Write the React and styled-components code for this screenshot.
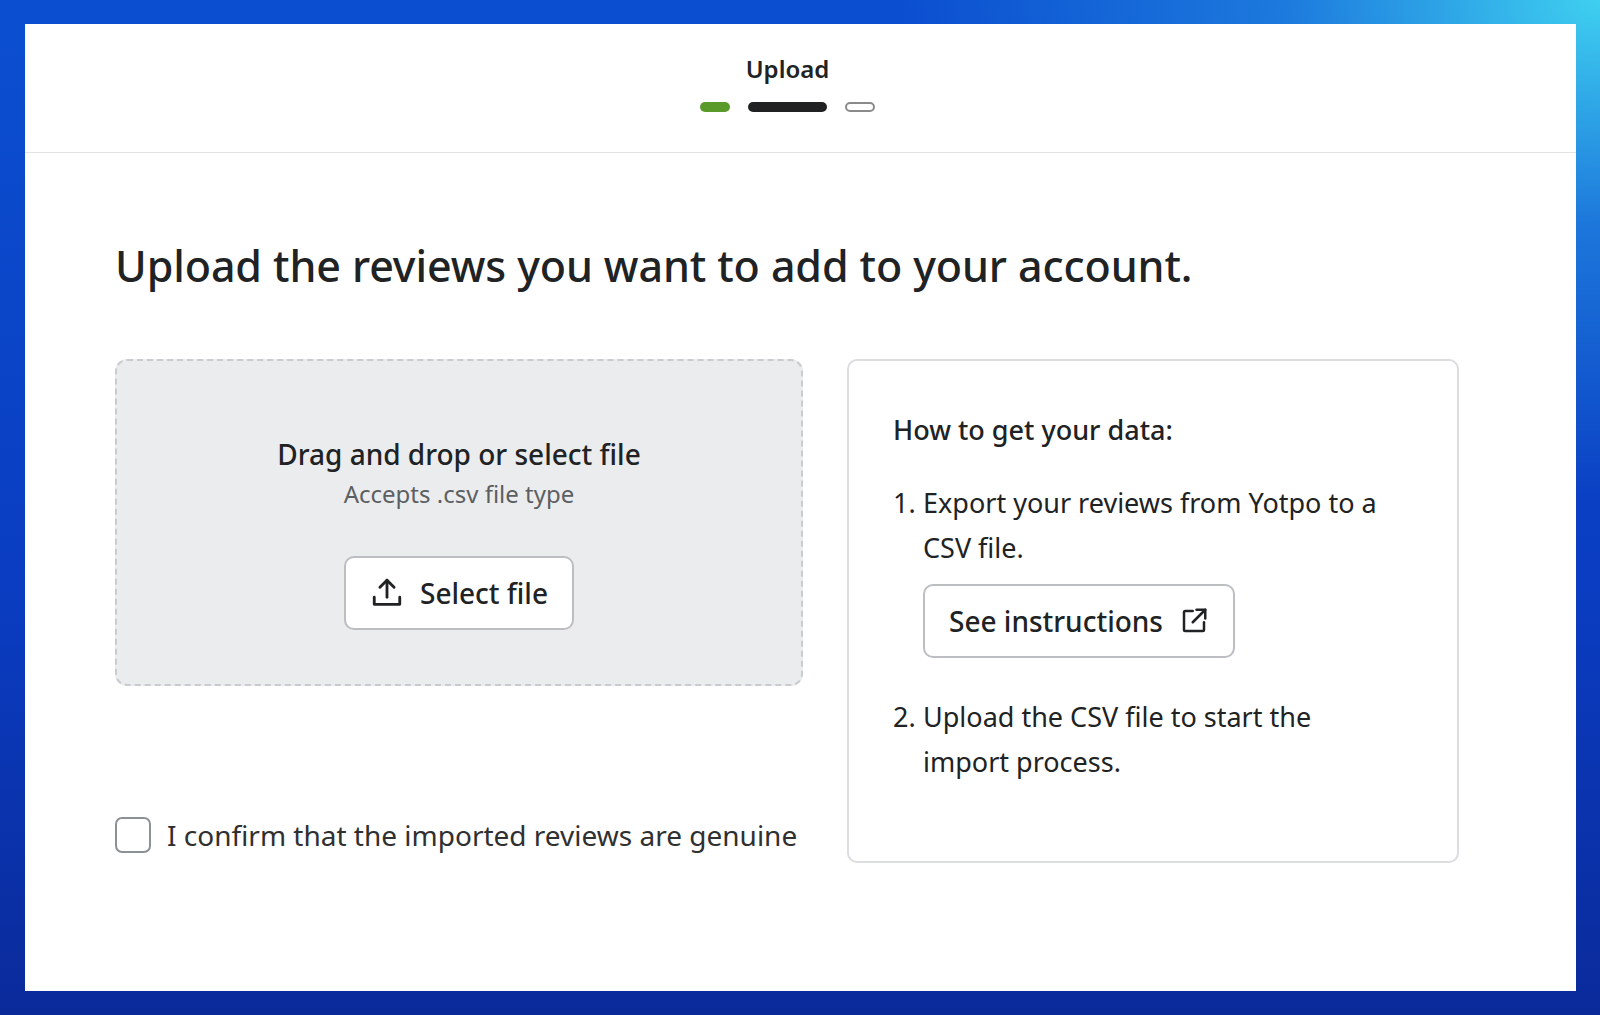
import React from "react";
import styled, { createGlobalStyle } from "styled-components";

const Global = createGlobalStyle`
  html, body { margin: 0; height: 100%; }
  body {
    font-family: "Noto Sans", "Open Sans", sans-serif;
    color: #202223;
    background:
      radial-gradient(ellipse 700px 500px at 100% 0%, #3fd0f0 0%, rgba(40,150,230,0.6) 45%, rgba(20,90,210,0) 100%),
      linear-gradient(180deg, #0b4fd0 0%, #0a3cc0 60%, #0a2a9a 100%);
  }
`;

const Frame = styled.div`
  width: 1600px;
  height: 1015px;
  padding: 24px 24px 24px 25px;
  box-sizing: border-box;
`;

const Panel = styled.div`
  background: #fff;
  height: 967px;
  display: flex;
  flex-direction: column;
`;

const Header = styled.header`
  height: 129px;
  border-bottom: 1px solid #e3e3e3;
  display: flex;
  flex-direction: column;
  align-items: center;
  padding-top: 28px;
  padding-right: 26px;
  box-sizing: border-box;
`;

const StepTitle = styled.div`
  font-size: 24px;
  font-weight: 600;
`;

const Steps = styled.div`
  display: flex;
  gap: 18px;
  margin-top: 17px;
`;

const Step = styled.span`
  height: 10px;
  width: ${(p) => p.w}px;
  border-radius: 6px;
  box-sizing: border-box;
  background: ${(p) => p.bg};
  border: ${(p) => (p.outline ? "2px solid #8a8a8a" : "none")};
`;

const Body = styled.main`
  padding: 83px 0 0 90px;
`;

const Heading = styled.h1`
  margin: 0 0 64px;
  font-size: 43px;
  font-weight: 500;
  letter-spacing: -0.1px;
`;

const Columns = styled.div`
  display: flex;
  gap: 44px;
  align-items: flex-start;
`;

const LeftCol = styled.div`
  width: 688px;
  display: flex;
  flex-direction: column;
  gap: 130px;
`;

const DropZone = styled.div`
  height: 327px;
  background: #ebecee;
  border: 2px dashed #c9cbcf;
  border-radius: 12px;
  box-sizing: border-box;
  display: flex;
  flex-direction: column;
  align-items: center;
  justify-content: center;
`;

const DropTitle = styled.div`
  font-size: 28px;
  font-weight: 500;
  margin-top: 20px;
`;

const DropSub = styled.div`
  font-size: 24px;
  color: #5c5f62;
  margin-top: 4px;
`;

const Button = styled.button`
  font-family: inherit;
  display: inline-flex;
  align-items: center;
  gap: 16px;
  background: #fff;
  border: 2px solid #bcbec1;
  border-radius: 10px;
  height: 74px;
  padding: 0 24px;
  font-size: 28px;
  font-weight: 500;
  color: #202223;
  margin-top: ${(p) => p.mt || 0}px;
`;

const CheckRow = styled.label`
  display: flex;
  align-items: center;
  gap: 16px;
  font-size: 28px;
  color: #303030;
`;

const Box = styled.span`
  width: 36px;
  height: 36px;
  border: 2px solid #8c9196;
  border-radius: 7px;
  box-sizing: border-box;
`;

const InfoCard = styled.div`
  width: 612px;
  height: 504px;
  border: 2px solid #dcdde0;
  border-radius: 10px;
  box-sizing: border-box;
  padding: 50px 60px 46px 44px;
`;

const InfoTitle = styled.div`
  font-size: 27px;
  font-weight: 500;
  margin-bottom: 32px;
`;

const Item = styled.div`
  display: flex;
  font-size: 27px;
  line-height: 45px;
`;

const Num = styled.span`
  width: 30px;
  flex-shrink: 0;
`;

const ButtonWrap = styled.div`
  margin: 14px 0 36px;
`;

const UploadIcon = () => (
  <svg width="34" height="34" viewBox="0 0 24 24" fill="none" stroke="#202223" strokeWidth="2" strokeLinecap="round" strokeLinejoin="round">
    <path d="M12 15V3" />
    <path d="M7 8l5-5 5 5" />
    <path d="M3 15v5h18v-5" />
  </svg>
);

const ExternalIcon = () => (
  <svg width="30" height="30" viewBox="0 0 24 24" fill="none" stroke="#202223" strokeWidth="2" strokeLinecap="round" strokeLinejoin="round">
    <path d="M11 4H5a1 1 0 0 0-1 1v14a1 1 0 0 0 1 1h14a1 1 0 0 0 1-1v-6" />
    <path d="M14 3h7v7" />
    <path d="M21 3l-10 10" />
  </svg>
);

export default function App() {
  return (
    <>
      <Global />
      <Frame>
        <Panel>
          <Header>
            <StepTitle>Upload</StepTitle>
            <Steps>
              <Step w={30} bg="#5a9a2a" />
              <Step w={79} bg="#1f2123" />
              <Step w={30} bg="#fff" outline />
            </Steps>
          </Header>
          <Body>
            <Heading>Upload the reviews you want to add to your account.</Heading>
            <Columns>
              <LeftCol>
                <DropZone>
                  <DropTitle>Drag and drop or select file</DropTitle>
                  <DropSub>Accepts .csv file type</DropSub>
                  <Button mt={46}>
                    <UploadIcon />
                    Select file
                  </Button>
                </DropZone>
                <CheckRow>
                  <Box />
                  I confirm that the imported reviews are genuine
                </CheckRow>
              </LeftCol>
              <InfoCard>
                <InfoTitle>How to get your data:</InfoTitle>
                <Item>
                  <Num>1.</Num>
                  <div>
                    Export your reviews from Yotpo to a CSV file.
                    <ButtonWrap>
                      <Button>
                        See instructions
                        <ExternalIcon />
                      </Button>
                    </ButtonWrap>
                  </div>
                </Item>
                <Item>
                  <Num>2.</Num>
                  <div>Upload the CSV file to start the import process.</div>
                </Item>
              </InfoCard>
            </Columns>
          </Body>
        </Panel>
      </Frame>
    </>
  );
}
